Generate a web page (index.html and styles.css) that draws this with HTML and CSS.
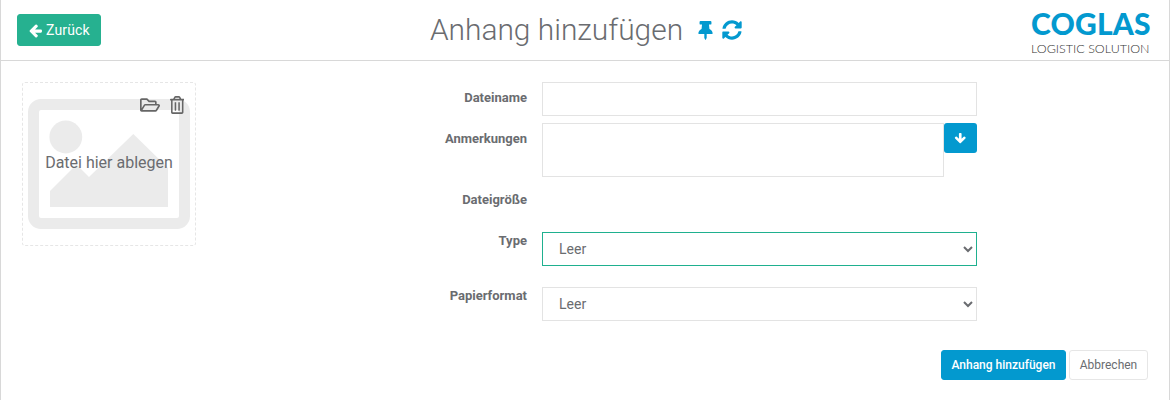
FILE: index.html
```html
<!DOCTYPE html>
<html lang="de">
<head>
<meta charset="utf-8">
<title>Anhang hinzufügen</title>
<link rel="stylesheet" href="styles.css">
</head>
<body>
<div class="page">
  <header class="header">
    <div class="header-left">
      <button class="btn btn-green" type="button">
        <svg class="icon-back" viewBox="0 0 1792 1792"><path d="M1664 896v128q0 53-32.5 90.5t-84.5 37.5h-704l293 294q38 36 38 90t-38 90l-75 76q-37 37-90 37-52 0-91-37l-651-652q-37-37-37-90 0-52 37-91l651-650q38-38 91-38 52 0 90 38l75 74q38 38 38 91t-38 91l-293 293h704q52 0 84.5 37.5t32.5 90.5z"/></svg>
        Zurück
      </button>
    </div>
    <div class="title-wrap">
      <h1 class="title">Anhang hinzufügen</h1>
      <svg class="icon-pin" viewBox="0 0 384 512"><path d="M298.028 214.267L285.793 96H328c13.255 0 24-10.745 24-24V24c0-13.255-10.745-24-24-24H56C42.745 0 32 10.745 32 24v48c0 13.255 10.745 24 24 24h42.207L85.972 214.267C37.465 236.82 0 277.261 0 328c0 13.255 10.745 24 24 24h136v104.007c0 1.242.289 2.467.845 3.578l24 48c2.941 5.882 11.364 5.893 14.311 0l24-48a8.008 8.008 0 0 0 .845-3.578V352h136c13.255 0 24-10.745 24-24-.001-51.183-37.983-91.42-85.973-113.733z"/></svg>
      <svg class="icon-refresh" viewBox="0 0 512 512"><path d="M370.72 133.28C339.458 104.008 298.888 87.962 255.848 88c-77.458.068-144.328 53.178-162.791 126.85-1.344 5.363-6.122 9.15-11.651 9.15H24.103c-7.498 0-13.194-6.807-11.807-14.176C33.933 94.924 134.813 8 256 8c66.448 0 126.791 26.136 171.315 68.685L463.03 40.97C478.149 25.851 504 36.559 504 57.941V192c0 13.255-10.745 24-24 24H345.941c-21.382 0-32.09-25.851-16.971-40.971l41.75-41.749zM32 296h134.059c21.382 0 32.09 25.851 16.971 40.971l-41.75 41.75c31.262 29.273 71.835 45.319 114.876 45.28 77.418-.07 144.315-53.144 162.787-126.849 1.344-5.363 6.122-9.15 11.651-9.15h57.304c7.498 0 13.194 6.807 11.807 14.176C478.067 417.076 377.187 504 256 504c-66.448 0-126.791-26.136-171.315-68.685L48.97 471.03C33.851 486.149 8 475.441 8 454.059V320c0-13.255 10.745-24 24-24z"/></svg>
    </div>
    <div class="logo">
      <span class="logo-main">COGLAS</span>
      <span class="logo-sub">LOGISTIC SOLUTION</span>
    </div>
  </header>
  <main class="content">
    <section class="dropzone">
      <svg class="placeholder" viewBox="0 0 172 162">
        <rect class="ph-frame" x="10.5" y="21.5" width="151" height="119" rx="7.5"/>
        <circle class="ph-fill" cx="42.8" cy="54" r="16.4"/>
        <polygon class="ph-fill" points="27,108 53.5,81.5 66,94 110.3,51 145,85 145,124 27,124"/>
      </svg>
      <div class="drop-actions">
        <svg class="icon-folder" viewBox="0 0 576 512"><path d="M527.9 224H480v-48c0-26.5-21.5-48-48-48H272l-64-64H48C21.5 64 0 85.5 0 112v288c0 26.5 21.5 48 48 48h400c16.5 0 31.9-8.5 40.7-22.6l79.9-128c20-31.9-3-73.4-40.7-73.4zM48 118c0-3.3 2.7-6 6-6h134.1l64 64H426c3.3 0 6 2.7 6 6v42H152c-16.8 0-32.4 8.8-41.1 23.2L48 351.4zm400 282H72l77.2-128H528z"/></svg>
        <svg class="icon-trash" viewBox="0 0 448 512" preserveAspectRatio="none"><path d="M192 188v216c0 6.627-5.373 12-12 12h-24c-6.627 0-12-5.373-12-12V188c0-6.627 5.373-12 12-12h24c6.627 0 12 5.373 12 12zm100-12h-24c-6.627 0-12 5.373-12 12v216c0 6.627 5.373 12 12 12h24c6.627 0 12-5.373 12-12V188c0-6.627-5.373-12-12-12zm132-96c13.255 0 24 10.745 24 24v12c0 6.627-5.373 12-12 12h-20v336c0 26.51-21.49 48-48 48H80c-26.51 0-48-21.49-48-48V128H12c-6.627 0-12-5.373-12-12v-12c0-13.255 10.745-24 24-24h74.411l34.018-56.696A48 48 0 0 1 173.589 0h100.823a48 48 0 0 1 41.16 23.304L349.589 80H424zM154.389 80h139.223L276.16 50.913A6 6 0 0 0 271.015 48h-94.028a6 6 0 0 0-5.145 2.913L154.389 80zM368 128H80v330a6 6 0 0 0 6 6h276a6 6 0 0 0 6-6V128z"/></svg>
      </div>
      <span class="drop-text">Datei hier ablegen</span>
    </section>
    <form class="form">
      <div class="row row-name">
        <label class="label">Dateiname</label>
        <input class="field field-wide" type="text">
      </div>
      <div class="row row-notes">
        <label class="label">Anmerkungen</label>
        <textarea class="field field-notes"></textarea>
        <button class="btn-down" type="button" aria-label="Herunter">
          <svg class="icon-down" viewBox="0 0 1792 1792"><path d="M1675 832q0 53-37 90l-651 652q-39 37-91 37-53 0-90-37l-651-652q-38-36-38-90 0-53 38-91l74-75q39-37 91-37 53 0 90 37l294 294v-704q0-52 38-90t90-38h128q52 0 90 38t38 90v704l294-294q37-37 90-37 52 0 91 37l75 75q37 39 37 91z"/></svg>
        </button>
      </div>
      <div class="row row-size">
        <label class="label">Dateigröße</label>
      </div>
      <div class="row row-type">
        <label class="label">Type</label>
        <select class="field field-wide field-select field-active"><option>Leer</option></select>
      </div>
      <div class="row row-paper">
        <label class="label">Papierformat</label>
        <select class="field field-wide field-select"><option>Leer</option></select>
      </div>
      <div class="actions">
        <button class="btn btn-blue" type="button">Anhang hinzufügen</button>
        <button class="btn btn-plain" type="button">Abbrechen</button>
      </div>
    </form>
  </main>
</div>
</body>
</html>
```

FILE: styles.css
```css
* { box-sizing: border-box; }
html, body { margin: 0; padding: 0; background: #fff; }
body { font-family: Roboto, "Liberation Sans", sans-serif; color: #6a6c70; }
.page {
  height: 400px;
  overflow: hidden;
  border-left: 1px solid #d8d8d8;
  border-right: 1px solid #d8d8d8;
}
.header {
  display: grid;
  grid-template-columns: 1fr auto 1fr;
  align-items: center;
  height: 61px;
  border-bottom: 1px solid #d8d8d8;
  padding: 0 20px 0 16px;
}
.header-left { display: flex; }
.btn {
  font-family: Roboto, "Liberation Sans", sans-serif;
  border-radius: 3px;
  cursor: pointer;
}
.btn-green {
  display: flex;
  align-items: center;
  gap: 3px;
  width: 84px;
  height: 32px;
  padding: 0 0 0 10px;
  background: #26b190;
  border: 1px solid #26b190;
  color: #fff;
  font-size: 14px;
  font-weight: 400;
  letter-spacing: 0.15px;
}
.icon-back { width: 15px; height: 15px; fill: #fff; }
.title-wrap { display: flex; align-items: center; padding-left: 6px; }
.title {
  margin: 0;
  font-size: 29.9px;
  font-weight: 300;
  line-height: 36px;
  color: #6a6c70;
}
.icon-pin { width: 15px; height: 19px; margin-left: 15px; fill: #0399cf; }
.icon-refresh { width: 20px; height: 20px; margin-left: 9px; fill: #0399cf; }
.logo {
  justify-self: end;
  display: flex;
  flex-direction: column;
  align-items: flex-start;
  gap: 1px;
  width: 118px;
}
.logo-main {
  font-family: Lato, "Liberation Sans", sans-serif;
  font-weight: 900;
  font-size: 30px;
  line-height: 36px;
  letter-spacing: 0.2px;
  color: #0399cf;
}
.logo-sub {
  font-family: Lato, "Liberation Sans", sans-serif;
  font-weight: 300;
  font-size: 12.5px;
  line-height: 14px;
  color: #333;
  white-space: nowrap;
}
.content {
  display: flex;
  padding: 21px 21px 0 21px;
}
.dropzone {
  position: relative;
  flex: none;
  width: 174px;
  height: 164px;
  border: 1px dashed #e6e6e6;
  border-radius: 3px;
}
.placeholder { display: block; width: 172px; height: 162px; }
.ph-frame { fill: none; stroke: #ebebeb; stroke-width: 11; }
.ph-fill { fill: #ebebeb; }
.drop-actions {
  position: absolute;
  top: 13px;
  right: 11px;
  display: flex;
  align-items: center;
  gap: 10px;
}
.icon-folder { width: 20px; height: 18px; fill: #666; }
.icon-trash { width: 14.5px; height: 18px; fill: #666; }
.drop-text {
  position: absolute;
  left: 0;
  right: 0;
  top: 70px;
  text-align: center;
  font-size: 16px;
  line-height: 20px;
  color: #6a6c70;
}
.form { flex: 1; margin-left: 200px; }
.row {
  display: grid;
  grid-template-columns: 131px 435px;
  column-gap: 15px;
  align-items: start;
}
.label {
  text-align: right;
  font-size: 13px;
  font-weight: 700;
  line-height: 17px;
  padding-top: 7px;
  color: #6a6c70;
}
.field {
  display: block;
  height: 34px;
  border: 1px solid #e3e3e3;
  background: #fff;
  border-radius: 0;
  font-family: Roboto, "Liberation Sans", sans-serif;
  font-size: 14px;
  color: #6a6c70;
  outline: none;
}
.field-wide { width: 435px; }
.row-notes {
  position: relative;
  margin-top: 7px;
  height: 54px;
}
.field-notes { width: 402px; height: 54px; resize: none; }
.btn-down {
  position: absolute;
  left: 548px;
  top: 0;
  width: 33px;
  height: 30px;
  border: 0;
  border-radius: 3px;
  background: #0399cf;
  display: flex;
  align-items: center;
  justify-content: center;
  padding: 0;
}
.icon-down { width: 12.5px; height: 12.5px; fill: #fff; }
.row-size { margin-top: 7px; height: 48px; }
.field-select { padding: 0 12px; }
.field-active { border-color: #1fb08f; }
.row-type .label { padding-top: 0; }
.row-paper { margin-top: 21px; }
.row-paper .label { padding-top: 0; }
.actions {
  display: flex;
  justify-content: flex-end;
  gap: 3px;
  margin-top: 29px;
}
.btn-blue {
  width: 125px;
  height: 30px;
  background: #0399cf;
  border: 1px solid #0399cf;
  color: #fff;
  font-size: 12px;
  font-weight: 500;
  padding: 0;
}
.btn-plain {
  width: 79px;
  height: 30px;
  background: #fff;
  border: 1px solid #e6e6e6;
  color: #6a6c70;
  font-size: 12px;
  padding: 0;
}
```
